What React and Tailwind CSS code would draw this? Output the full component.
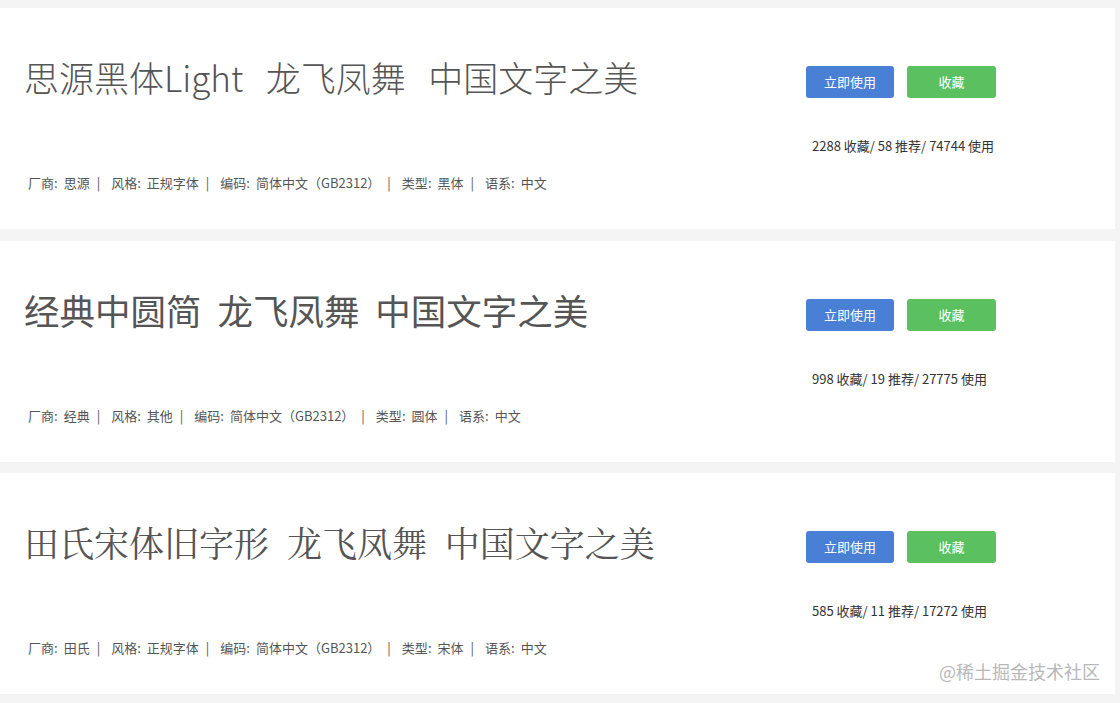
import React from "react";

const fonts = [
  {
    title: "思源黑体Light\u00a0\u00a0\u2009龙飞凤舞\u00a0\u00a0\u2009中国文字之美",
    titleClass: "font-light text-[35px]",
    titleFont: "'Noto Sans CJK SC', sans-serif",
    vendor: "思源",
    style: "正规字体",
    type: "黑体",
    stats: "2288 收藏/ 58 推荐/ 74744 使用",
  },
  {
    title: "经典中圆简\u00a0\u00a0龙飞凤舞\u00a0\u00a0中国文字之美",
    titleClass: "font-normal text-[35.5px]",
    titleFont: "'Noto Sans CJK SC', sans-serif",
    vendor: "经典",
    style: "其他",
    type: "圆体",
    stats: "998 收藏/ 19 推荐/ 27775 使用",
  },
  {
    title: "田氏宋体旧字形\u00a0\u00a0龙飞凤舞\u00a0\u00a0中国文字之美",
    titleClass: "font-normal text-[35px]",
    titleFont: "'Noto Serif CJK SC', 'Noto Sans CJK SC', serif",
    vendor: "田氏",
    style: "正规字体",
    type: "宋体",
    stats: "585 收藏/ 11 推荐/ 17272 使用",
  },
];

const MetaItem = ({ label, value, last }) => (
  <>
    <span>{label}:</span>
    <span className="ml-[6px]">{value}</span>
    {!last && <span className="ml-[7px] mr-[11px] text-[#555]">|</span>}
  </>
);

const FontCard = ({ font }) => (
  <div className="flex h-[221px] w-[1115px] bg-white">
    <div className="flex flex-1 flex-col pl-6">
      <h2
        className={`mt-[51px] leading-[36px] text-[#555] whitespace-nowrap ${font.titleClass}`}
        style={{ fontFamily: font.titleFont }}
      >
        {font.title}
      </h2>
      <p className="mt-auto mb-[37px] flex items-center pl-1 text-[13px] leading-[18px] text-[#555] whitespace-nowrap">
        <MetaItem label="厂商" value={font.vendor} />
        <MetaItem label="风格" value={font.style} />
        <MetaItem label="编码" value="简体中文（GB2312）" />
        <MetaItem label="类型" value={font.type} />
        <MetaItem label="语系" value="中文" last />
      </p>
    </div>
    <div className="flex w-[309px] flex-col pt-[58px]">
      <div className="flex gap-[13px]">
        <button className="h-8 w-[88px] rounded-[3px] bg-[#4a7fd6] text-[13px] leading-[30px] text-white">
          立即使用
        </button>
        <button className="h-8 w-[89px] rounded-[3px] bg-[#5bc160] text-[13px] leading-[30px] text-white">
          收藏
        </button>
      </div>
      <p className="mt-[39px] pl-[6px] text-[13px] leading-[18px] text-[#333]">{font.stats}</p>
    </div>
  </div>
);

export default function App() {
  return (
    <div
      className="relative flex h-[703px] w-[1120px] flex-col gap-[11.5px] overflow-hidden bg-[#f4f4f4] pt-2"
      style={{ fontFamily: "'Noto Sans CJK SC', 'Liberation Sans', sans-serif" }}
    >
      {fonts.map((font) => (
        <FontCard key={font.vendor} font={font} />
      ))}
      <span className="absolute right-[20px] bottom-[23px] text-[18px] leading-none text-[#b8b8b8]">
        @稀土掘金技术社区
      </span>
    </div>
  );
}
